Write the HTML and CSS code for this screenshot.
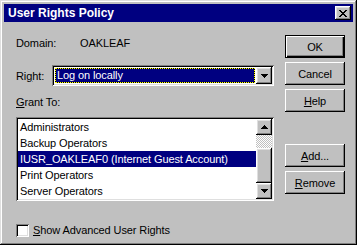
FILE: index.html
```html
<!DOCTYPE html>
<html lang="en">
<head>
  <meta charset="UTF-8" />
  <title>User Rights Policy</title>
  <link rel="stylesheet" href="styles.css">
</head>
<body>
  <div class="window">
    <div class="titlebar">
      <span class="title">User Rights Policy</span>
      <span class="close-btn raised">
        <svg width="8" height="7" viewBox="0 0 8 7" shape-rendering="crispEdges">
          <path d="M0 0h2v1h-2z M6 0h2v1h-2z M1 1h2v1h-2z M5 1h2v1h-2z M2 2h4v1h-4z M3 3h2v1h-2z M2 4h4v1h-4z M1 5h2v1h-2z M5 5h2v1h-2z M0 6h2v1h-2z M6 6h2v1h-2z" fill="#000"/>
        </svg>
      </span>
    </div>

    <div class="client">
      <div class="main">
        <div class="domain-row">
          <span class="domain-label">Domain:</span>
          <span>OAKLEAF</span>
        </div>

        <div class="right-row">
          <span class="right-label">Ri<u>g</u>ht:</span>
          <div class="combo sunken">
            <div class="combo-value">Log on locally</div>
            <div class="combo-btn raised">
              <svg width="7" height="4" viewBox="0 0 7 4" shape-rendering="crispEdges">
                <path d="M0 0h7v1h-7z M1 1h5v1h-5z M2 2h3v1h-3z M3 3h1v1h-1z" fill="#000"/>
              </svg>
            </div>
          </div>
        </div>

        <div class="grant-label"><u>G</u>rant To:</div>

        <div class="listbox sunken">
          <ul class="items">
            <li>Administrators</li>
            <li>Backup Operators</li>
            <li class="selected">IUSR_OAKLEAF0 (Internet Guest Account)</li>
            <li>Print Operators</li>
            <li>Server Operators</li>
          </ul>
          <div class="scrollbar">
            <div class="scroll-btn raised">
              <svg width="7" height="4" viewBox="0 0 7 4" shape-rendering="crispEdges">
                <path d="M3 0h1v1h-1z M2 1h3v1h-3z M1 2h5v1h-5z M0 3h7v1h-7z" fill="#000"/>
              </svg>
            </div>
            <div class="track"></div>
            <div class="thumb raised"></div>
            <div class="scroll-btn raised">
              <svg width="7" height="4" viewBox="0 0 7 4" shape-rendering="crispEdges">
                <path d="M0 0h7v1h-7z M1 1h5v1h-5z M2 2h3v1h-3z M3 3h1v1h-1z" fill="#000"/>
              </svg>
            </div>
          </div>
        </div>

        <div class="check-row">
          <span class="checkbox sunken"></span>
          <span><u>S</u>how Advanced User Rights</span>
        </div>
      </div>

      <div class="buttons">
        <button class="btn default">OK</button>
        <button class="btn">Cancel</button>
        <button class="btn"><u>H</u>elp</button>
        <button class="btn add-btn"><u>A</u>dd...</button>
        <button class="btn"><u>R</u>emove</button>
      </div>
    </div>
  </div>
</body>
</html>
```

FILE: styles.css
```css
body {
  margin: 0;
  background-color: #fff;
  color: #000;
  font-family: "Liberation Sans", Arial, sans-serif;
  font-size: 11px;
  letter-spacing: -0.1px;
}
.raised {
  background-color: #c0c0c0;
  box-shadow: inset -1px -1px #000, inset 1px 1px #fff, inset -2px -2px #808080, inset 2px 2px #dfdfdf;
}
.sunken {
  box-shadow: inset 1px 1px #808080, inset -1px -1px #fff, inset 2px 2px #000, inset -2px -2px #dfdfdf;
}
.window {
  box-sizing: border-box;
  width: 357px;
  height: 245px;
  padding: 4px;
  background-color: #c0c0c0;
  box-shadow: inset -1px -1px #000, inset 1px 1px #dfdfdf, inset -2px -2px #808080, inset 2px 2px #fff;
  display: flex;
  flex-direction: column;
}
.titlebar {
  height: 18px;
  padding: 0 2px 0 4px;
  background-color: #000080;
  color: #fff;
  display: flex;
  align-items: center;
  justify-content: space-between;
}
.title {
  font-size: 12px;
  font-weight: bold;
  letter-spacing: 0;
}
.close-btn {
  width: 16px;
  height: 14px;
  display: flex;
  align-items: center;
  justify-content: center;
}
.client {
  flex: 1;
  display: flex;
  padding: 0 8px 0 12px;
}
.main {
  width: 258px;
}
.domain-row {
  margin-top: 15px;
  line-height: 13px;
  display: flex;
}
.domain-label {
  width: 64px;
}
.right-row {
  margin-top: 15px;
  display: flex;
  align-items: center;
}
.right-label {
  width: 36px;
}
.combo {
  box-sizing: border-box;
  width: 222px;
  height: 21px;
  padding: 2px;
  background-color: #fff;
  display: flex;
}
.combo-value {
  flex: 1;
  margin: 1px 1px 1px 1px;
  padding-left: 2px;
  line-height: 15px;
  background-color: #000080;
  color: #fff;
  box-shadow: inset 0 0 0 1px #000;
  outline: 1px dotted #ff0;
  outline-offset: -1px;
}
.combo-btn {
  width: 16px;
  height: 17px;
  display: flex;
  align-items: center;
  justify-content: center;
}
.grant-label {
  margin-top: 10px;
  line-height: 13px;
}
.listbox {
  box-sizing: border-box;
  margin-top: 8px;
  height: 84px;
  padding: 2px;
  background-color: #fff;
  display: flex;
}
.items {
  flex: 1;
  margin: 0;
  padding: 0;
  list-style: none;
  overflow: hidden;
}
.items li {
  height: 16px;
  line-height: 16px;
  padding-left: 2px;
  white-space: nowrap;
}
.items li.selected {
  background-color: #000080;
  color: #fff;
}
.scrollbar {
  width: 16px;
  display: flex;
  flex-direction: column;
}
.scroll-btn {
  height: 16px;
  display: flex;
  align-items: center;
  justify-content: center;
}
.track {
  height: 13px;
  background-image: repeating-conic-gradient(#c0c0c0 0 25%, #fff 0 50%);
  background-size: 2px 2px;
}
.thumb {
  flex: 1;
}
.check-row {
  margin-top: 23px;
  display: flex;
  align-items: center;
  gap: 4px;
  line-height: 13px;
}
.checkbox {
  width: 13px;
  height: 13px;
  background-color: #fff;
}
.buttons {
  margin-left: 11px;
  padding-top: 13px;
  display: flex;
  flex-direction: column;
  gap: 4px;
}
.btn {
  width: 60px;
  height: 23px;
  padding: 0;
  border: none;
  font: inherit;
  letter-spacing: inherit;
  color: #000;
  background-color: #c0c0c0;
  box-shadow: inset -1px -1px #000, inset 1px 1px #fff, inset -2px -2px #808080, inset 2px 2px #c0c0c0;
}
.btn.default {
  box-shadow: inset 0 0 0 1px #000, inset 2px 2px #fff, inset -2px -2px #000, inset -3px -3px #808080;
}
.add-btn {
  margin-top: 28px;
}
```
